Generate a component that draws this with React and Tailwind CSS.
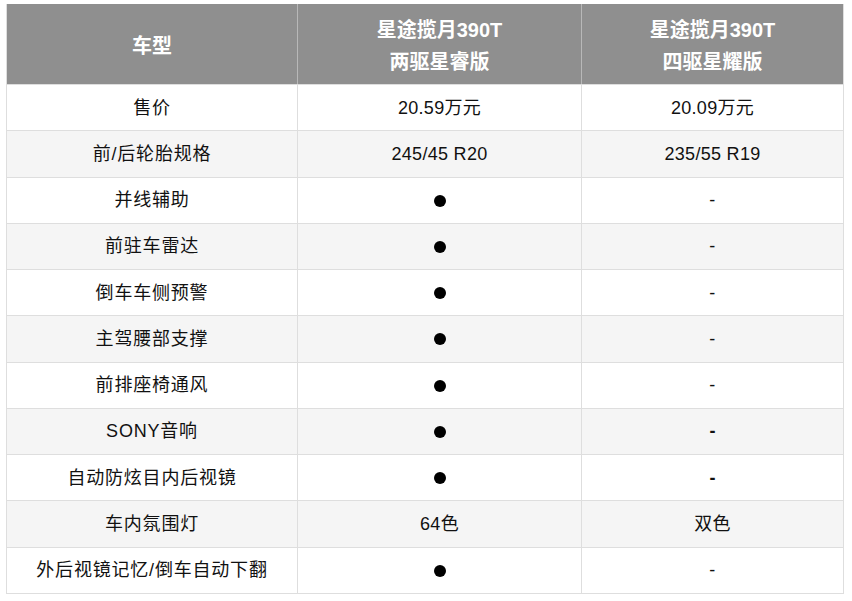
import React from "react";

const rows = [
  ["售价", "20.59万元", "20.09万元"],
  ["前/后轮胎规格", "245/45 R20", "235/55 R19"],
  ["并线辅助", "dot", "-"],
  ["前驻车雷达", "dot", "-"],
  ["倒车车侧预警", "dot", "-"],
  ["主驾腰部支撑", "dot", "-"],
  ["前排座椅通风", "dot", "-"],
  ["SONY音响", "dot", "bold-"],
  ["自动防炫目内后视镜", "dot", "bold-"],
  ["车内氛围灯", "64色", "双色"],
  ["外后视镜记忆/倒车自动下翻", "dot", "-"],
];

function Cell({ value }) {
  if (value === "dot") {
    return <span className="block w-[12px] h-[12px] rounded-full bg-black" />;
  }
  if (value === "bold-") {
    return <span className="font-bold">-</span>;
  }
  return <span className="tracking-[0.3px]">{value}</span>;
}

export default function App() {
  return (
    <div
      className="w-[852px] h-[601px] bg-white pt-[4px] pl-[6px]"
      style={{ fontFamily: '"Liberation Sans", "Noto Sans CJK SC", sans-serif' }}
    >
      <div className="w-[838px] h-[590px] flex flex-col border border-[#dedede] border-t-0">
        <div className="h-[80px] flex bg-[#8f8f8f] text-white font-bold text-[20px] leading-[32px] pt-[4px]">
          <div className="w-[290px] flex items-center justify-center">车型</div>
          <div className="w-[284px] -mt-[4px] pt-[4px] flex flex-col items-center justify-center border-l border-[#b8b8b8]">
            <span>星途揽月390T</span>
            <span>两驱星睿版</span>
          </div>
          <div className="flex-1 -mt-[4px] pt-[4px] flex flex-col items-center justify-center border-l border-[#b8b8b8]">
            <span>星途揽月390T</span>
            <span>四驱星耀版</span>
          </div>
        </div>
        {rows.map((r, i) => (
          <div
            key={i}
            className={`flex-1 flex text-[18px] text-[#111] border-t border-[#dedede] ${
              i % 2 === 1 ? "bg-[#f5f5f5]" : "bg-white"
            }`}
          >
            <div className="w-[290px] flex items-center justify-center pt-[1px] tracking-[0.8px]">{r[0]}</div>
            <div className="w-[284px] flex items-center justify-center pt-[1px] border-l border-[#dedede]">
              <Cell value={r[1]} />
            </div>
            <div className="flex-1 flex items-center justify-center pt-[1px] border-l border-[#dedede]">
              <Cell value={r[2]} />
            </div>
          </div>
        ))}
      </div>
    </div>
  );
}
